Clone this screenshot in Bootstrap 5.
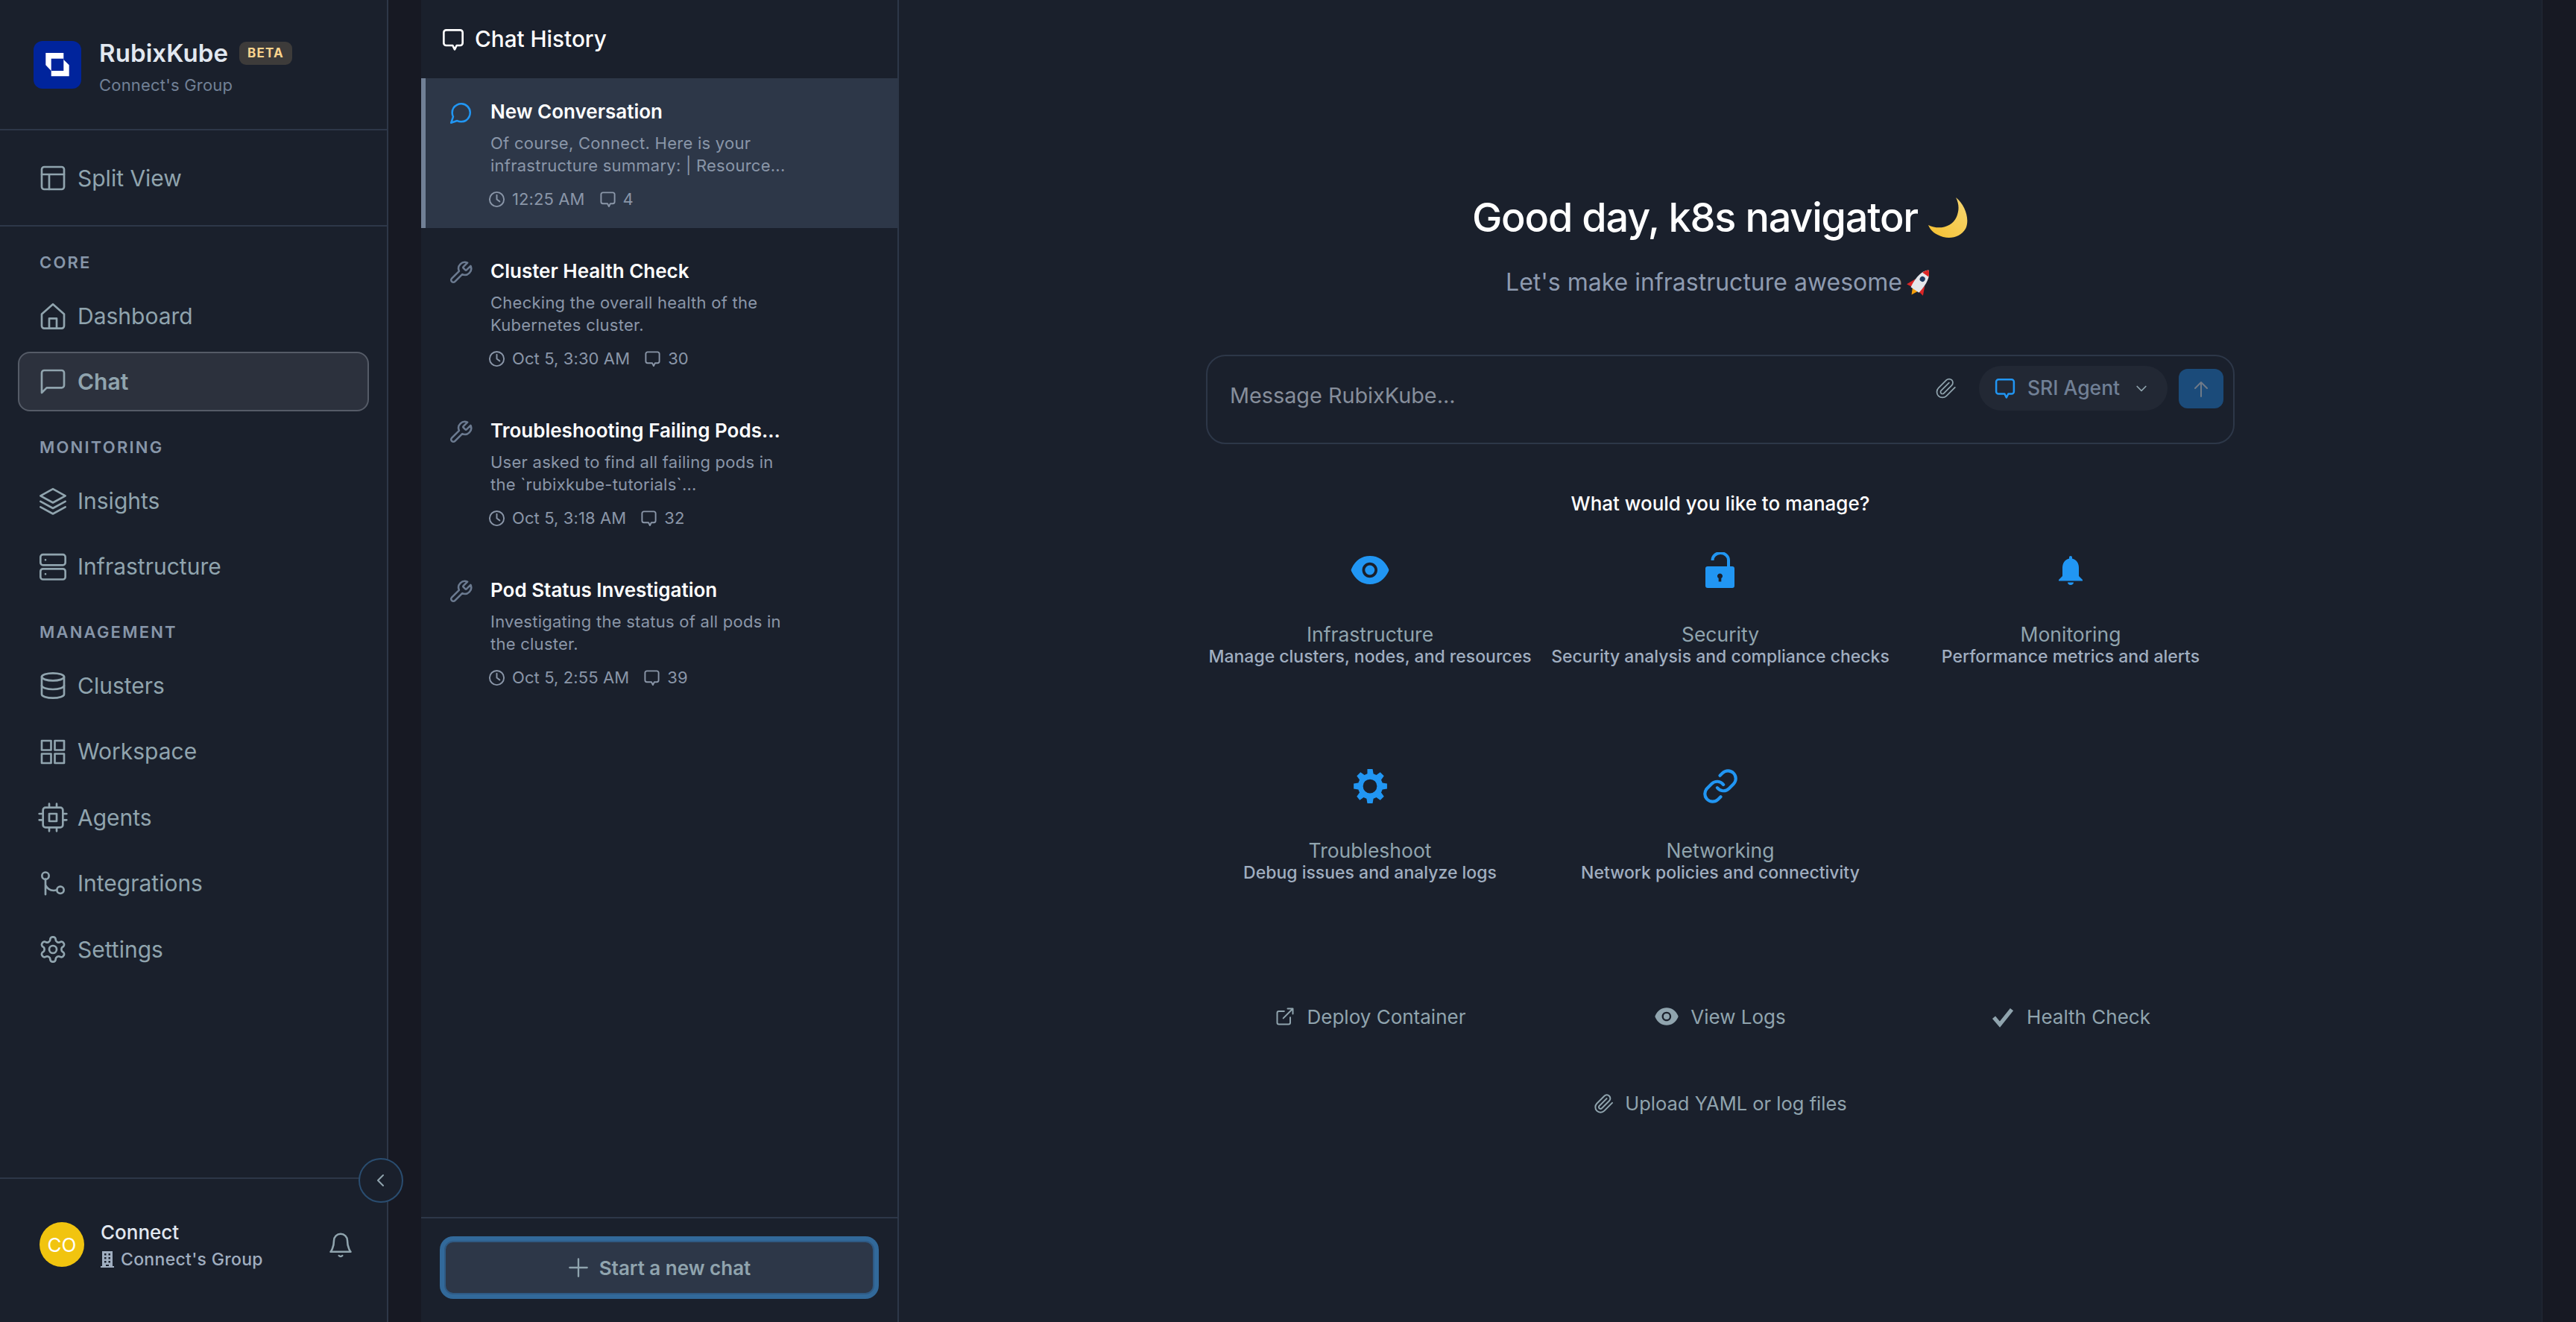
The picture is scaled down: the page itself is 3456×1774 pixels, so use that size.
<!DOCTYPE html>
<html lang="en">

<head>
    <meta charset="UTF-8">
    <meta name="viewport" content="width=device-width, initial-scale=1.0">
    <title>RubixKube Chat</title>
    <link href="https://cdn.jsdelivr.net/npm/bootstrap@5.3.3/dist/css/bootstrap.min.css" rel="stylesheet">
    <style>
        body {
            background: #171923;
            font-family: Inter, "Liberation Sans", sans-serif;
            height: 100vh;
            overflow: hidden;
        }

        .ico { fill: none; stroke: currentColor; stroke-width: 2; stroke-linecap: round; stroke-linejoin: round; flex-shrink: 0; }
        .ico-solid { fill: currentColor; stroke: none; flex-shrink: 0; }

        /* sidebar */
        .side-bar { width: 521px; background: #1a202c; border-right: 2px solid #2d3748; flex-shrink: 0; }
        .brand-box { height: 175px; padding: 55px 0 0 45px; border-bottom: 2px solid #2d3748; }
        .brand-logo { width: 64px; height: 64px; }
        .brand-text { margin-left: 24px; }
        .brand-name { font-size: 33px; font-weight: 600; line-height: 33px; letter-spacing: .1px; color: #e2e8f0; }
        .brand-badge { margin-left: 15px; background: #3d3b3a; color: #fbd38d; font-size: 17px; font-weight: 700; letter-spacing: 1.2px; line-height: 31px; height: 31px; padding: 0 11px; border-radius: 9px; }
        .brand-sub { font-size: 22px; line-height: 30px; margin-top: 11px; color: #718096; letter-spacing: .2px; }
        .split-box { height: 129px; padding: 24px 24px 0; border-bottom: 2px solid #2d3748; }
        .side-links { padding: 0 24px; }
        .side-links.is-loose { gap: 8.6px; }
        .side-label { height: 80px; padding: 32px 0 0 53px; line-height: 32px; font-size: 22px; font-weight: 600; letter-spacing: 2.2px; color: #8796a9; }
        .side-link { height: 80px; padding: 0 25px; gap: 13px; font-size: 30px; color: #90a4ae; border: 2px solid transparent; border-radius: 16px; }
        .side-link:hover { color: #90a4ae; }
        .side-link .ico { width: 40px; height: 40px; stroke-width: 1.6; }
        .side-link.is-active { background: #2c313d; border-color: #555b67; font-weight: 600; }
        .side-foot { height: 194px; padding: 0 44px 16px 53px; border-top: 2px solid #2d3748; }
        .user-dot { width: 60px; height: 60px; background: #f1c40f; color: #fff; font-size: 26px; }
        .user-info { margin-left: 22px; padding-top: 4px; }
        .user-name { font-size: 26px; font-weight: 500; line-height: 36px; color: #e2e8f0; }
        .user-org { font-size: 23px; font-weight: 500; line-height: 36px; gap: 9px; color: #a0aec0; letter-spacing: .3px; }
        .user-bell { color: #90a4ae; stroke-width: 1.7; }
        .collapse-btn { right: -22px; bottom: 160px; width: 60px; height: 60px; background: #1a202c; border: 2.5px solid #2a4d70; color: #90a4ae; }

        /* chat history */
        .history-panel { width: 641px; margin-left: 44px; background: #1a202c; border-right: 2px solid #2d3748; flex-shrink: 0; }
        .history-head { height: 105px; padding-left: 27px; gap: 13px; font-size: 29.7px; font-weight: 500; color: #fff; }
        .history-list { gap: 13px; }
        .history-item { height: 201px; border-left: 6px solid transparent; padding: 30px 0 0 30px; }
        .history-item.is-open { background: #2d3748; border-left-color: #718096; }
        .history-ico { width: 34px; height: 34px; stroke-width: 1.8; color: #6b7a90; }
        .history-ico.is-live { color: #2196f3; }
        .history-body { margin-left: 23px; width: 410px; }
        .history-title { font-size: 26px; font-weight: 600; line-height: 30px; color: #fff; white-space: nowrap; }
        .history-desc { font-size: 22px; line-height: 30px; margin-top: 12px; color: #8a96a8; letter-spacing: .25px; }
        .history-meta { font-size: 22px; line-height: 32px; margin: 14px 0 0 -3px; color: #8a96a8; gap: 9px; letter-spacing: .1px; }
        .history-meta .ico { width: 23px; height: 23px; }
        .history-meta span + svg { margin-left: 10px; }
        .history-foot { margin-top: auto; height: 141px; padding: 30px 31px 0; border-top: 2px solid #2d3748; }
        .new-chat { height: 72px; width: 100%; gap: 14px; background: #2d3748; border: 2px solid #2f5a84; box-shadow: 0 0 0 6px #32699a; border-radius: 12px; color: #90a4ae; font-size: 26px; font-weight: 600; }
        .new-chat:hover { background: #2d3748; color: #90a4ae; border-color: #2f5a84; }

        /* main */
        .main-pane { background: #1a202c; margin-right: 45px; border-right: 1px solid #232936; }
        .main-col { width: 1380px; }
        .hello-title { margin: 258px 0 0; font-size: 54px; font-weight: 500; line-height: 68px; letter-spacing: -1.2px; color: #fff; gap: 14px; }
        .hello-sub { margin-top: 33px; font-size: 32px; line-height: 40px; color: #8e9bb0; gap: 4px; }
        .ask-box { margin-top: 77px; height: 120px; border: 2px solid #2d3748; border-radius: 26px; padding: 13px 13px 0 30px; }
        .ask-text { font-size: 28.8px; margin-top: 18px; color: #868e9b; }
        .ask-clip { width: 30px; height: 30px; stroke-width: 1.4; color: #90a4ae; margin: 15px 29px 0 0; }
        .agent-pill { height: 60px; width: 253px; border-radius: 30px; background: #222834; padding-left: 20px; gap: 15px; color: #718096; font-size: 26.5px; font-weight: 500; }
        .agent-ico { width: 30px; height: 30px; color: #2196f3; }
        .agent-chev { width: 20px; height: 20px; color: #90a4ae; margin-left: 4px; }
        .send-btn { width: 60px; height: 53px; border-radius: 12px; background: #1b4b7a; color: #6f7a88; margin-left: 15px; margin-top: 4px; }
        .manage-head { margin-top: 62px; font-size: 26px; font-weight: 500; line-height: 36px; color: #fff; }
        .topic-grid { margin-top: 39px; display: grid; grid-template-columns: repeat(3, 440px); column-gap: 30px; row-gap: 128px; }
        .topic-ico { height: 64px; color: #2196f3; }
        .topic-name { margin-top: 38px; font-size: 26.5px; line-height: 32px; color: #90a4ae; }
        .topic-info { font-size: 23px; font-weight: 500; line-height: 28px; color: #a0aec0; white-space: nowrap; }
        .quick-grid { margin-top: 161px; display: grid; grid-template-columns: repeat(3, 440px); column-gap: 30px; }
        .quick-item { height: 36px; gap: 16px; font-size: 26px; color: #90a4ae; }
        .quick-item .ico { stroke-width: 1.7; }
        .quick-upload { margin-top: 81px; gap: 14px; font-size: 25.5px; }
        .quick-item .quick-check { stroke-width: 4; stroke-linecap: butt; stroke-linejoin: miter; }
    </style>
</head>

<body class="d-flex">

    <!-- icon sheet -->
    <svg width="0" height="0" class="position-absolute">
        <symbol id="i-split" viewBox="0 0 24 24"><rect x="3" y="3" width="18" height="18" rx="2"/><path d="M3 9h18M9 21V9"/></symbol>
        <symbol id="i-home" viewBox="0 0 24 24"><path d="M3 10.500 12 2.500l9 8V20a2 2 0 0 1-2 2H5a2 2 0 0 1-2-2z"/><path d="M9 22v-8h6v8"/></symbol>
        <symbol id="i-square-chat" viewBox="0 0 24 24"><path d="M21 15a2 2 0 0 1-2 2H7l-4 4V5a2 2 0 0 1 2-2h14a2 2 0 0 1 2 2z"/></symbol>
        <symbol id="i-layers" viewBox="0 0 24 24"><path d="M12 2.500 2 8l10 5.500L22 8zM2 17l10 5.500L22 17M2 12.500 12 18l10-5.500"/></symbol>
        <symbol id="i-server" viewBox="0 0 24 24"><rect x="2" y="2.500" width="20" height="8.500" rx="2"/><rect x="2" y="14" width="20" height="8.500" rx="2"/><path d="M6 6.800h.01M6 18.200h.01"/></symbol>
        <symbol id="i-db" viewBox="0 0 24 24"><ellipse cx="12" cy="5" rx="9" ry="3"/><path d="M3 5v14a9 3 0 0 0 18 0V5"/><path d="M3 12a9 3 0 0 0 18 0"/></symbol>
        <symbol id="i-grid" viewBox="0 0 24 24"><path d="M3 3h7.500v7.500H3zM13.500 3H21v7.500h-7.500zM13.500 13.500H21V21h-7.500zM3 13.500h7.500V21H3z"/></symbol>
        <symbol id="i-cpu" viewBox="0 0 24 24"><rect x="4" y="4" width="16" height="16" rx="2"/><rect x="9" y="9" width="6" height="6"/><path d="M9 1v3M15 1v3M9 20v3M15 20v3M20 9h3M20 14h3M1 9h3M1 14h3"/></symbol>
        <symbol id="i-branch" viewBox="0 0 24 24"><circle cx="6" cy="5.500" r="2.800"/><circle cx="18" cy="17" r="2.800"/><path d="M6 8.300v12.200M6 13c2 4 5.500 5 9.200 4"/></symbol>
        <symbol id="i-gear" viewBox="0 0 24 24"><path d="M12.220 2h-.44a2 2 0 0 0-2 2v.18a2 2 0 0 1-1 1.730l-.43.25a2 2 0 0 1-2 0l-.15-.08a2 2 0 0 0-2.730.73l-.22.38a2 2 0 0 0 .73 2.730l.15.1a2 2 0 0 1 1 1.720v.51a2 2 0 0 1-1 1.740l-.15.09a2 2 0 0 0-.73 2.730l.22.38a2 2 0 0 0 2.730.73l.15-.08a2 2 0 0 1 2 0l.43.25a2 2 0 0 1 1 1.730V20a2 2 0 0 0 2 2h.44a2 2 0 0 0 2-2v-.18a2 2 0 0 1 1-1.730l.43-.25a2 2 0 0 1 2 0l.15.08a2 2 0 0 0 2.730-.73l.22-.39a2 2 0 0 0-.73-2.730l-.15-.08a2 2 0 0 1-1-1.740v-.5a2 2 0 0 1 1-1.740l.15-.09a2 2 0 0 0 .73-2.730l-.22-.38a2 2 0 0 0-2.730-.73l-.15.08a2 2 0 0 1-2 0l-.43-.25a2 2 0 0 1-1-1.730V4a2 2 0 0 0-2-2z"/><circle cx="12" cy="12" r="3"/></symbol>
        <symbol id="i-bell" viewBox="0 0 24 24"><path d="M18 8.500a6 6 0 0 0-12 0c0 6.500-3 10-3 10h18s-3-3.500-3-10"/><path d="M10.500 22a2 2 0 0 0 3 0"/></symbol>
        <symbol id="i-bubble" viewBox="0 0 24 24"><path d="M5 2.500h14a2.500 2.500 0 0 1 2.500 2.500v10.500a2.500 2.500 0 0 1-2.500 2.500h-3.500L13.500 22l-2-4H5a2.500 2.500 0 0 1-2.500-2.500V5A2.500 2.500 0 0 1 5 2.500z"/></symbol>
        <symbol id="i-round-chat" viewBox="0 0 24 24"><path d="M21 11.500a8.380 8.380 0 0 1-.9 3.800 8.500 8.500 0 0 1-7.600 4.700 8.380 8.380 0 0 1-3.800-.9L3 21l1.900-5.700a8.380 8.380 0 0 1-.9-3.800 8.500 8.500 0 0 1 4.700-7.600 8.380 8.380 0 0 1 3.800-.9h.5a8.480 8.480 0 0 1 8 8z"/></symbol>
        <symbol id="i-wrench" viewBox="0 0 24 24"><path d="M14.700 6.300a1 1 0 0 0 0 1.400l1.600 1.600a1 1 0 0 0 1.400 0l3.770-3.770a6 6 0 0 1-7.940 7.940l-6.910 6.910a2.120 2.120 0 0 1-3-3l6.910-6.910a6 6 0 0 1 7.940-7.940z"/></symbol>
        <symbol id="i-clock" viewBox="0 0 24 24"><circle cx="12" cy="12" r="10"/><path d="M12 6v6l4 3"/></symbol>
        <symbol id="i-clip" viewBox="0 0 24 24"><path d="m21.440 11.050-9.190 9.190a6 6 0 0 1-8.490-8.490l8.570-8.570A4 4 0 1 1 18 8.840l-8.590 8.570a2 2 0 0 1-2.830-2.830l8.490-8.480"/></symbol>
        <symbol id="i-link" viewBox="0 0 24 24"><path d="M10 13a5 5 0 0 0 7.540.54l3-3a5 5 0 0 0-7.070-7.070l-1.720 1.710"/><path d="M14 11a5 5 0 0 0-7.540-.54l-3 3a5 5 0 0 0 7.070 7.070l1.710-1.710"/></symbol>
        <symbol id="i-export" viewBox="0 0 24 24"><path d="M18 13v6a2 2 0 0 1-2 2H5a2 2 0 0 1-2-2V8a2 2 0 0 1 2-2h6"/><path d="M15 3h6v6M10 14 21 3"/></symbol>
        <symbol id="i-eye" viewBox="64 64 896 896"><path d="M396 512a112 112 0 1 0 224 0 112 112 0 1 0-224 0zm546.200-25.800C847.400 286.500 704.100 186 512 186c-192.200 0-335.400 100.500-430.200 300.300a60.300 60.300 0 0 0 0 51.500C176.600 737.500 319.900 838 512 838c192.200 0 335.400-100.500 430.200-300.300 7.700-16.200 7.700-35 0-51.500zM508 688c-97.200 0-176-78.800-176-176s78.800-176 176-176 176 78.800 176 176-78.800 176-176 176z"/></symbol>
        <symbol id="i-gear-solid" viewBox="0 0 24 24"><path fill-rule="evenodd" d="M10.300 1h3.400l.5 3 1.900.8 2.500-1.800 2.400 2.400-1.800 2.500.8 1.900 3 .5v3.400l-3 .5-.8 1.900 1.800 2.500-2.400 2.400-2.500-1.800-1.900.8-.5 3h-3.400l-.5-3-1.900-.8-2.500 1.800L3.500 18.600l1.800-2.500-.8-1.900-3-.5v-3.400l3-.5.8-1.900-1.800-2.500L5.900 3l2.500 1.800 1.900-.8zM12 7.500a4.500 4.500 0 1 0 0 9 4.500 4.500 0 0 0 0-9z"/></symbol>
        <symbol id="i-unlock" viewBox="0 0 48 48"><path d="M7 19h33a3 3 0 0 1 3 3v23a3 3 0 0 1-3 3H7a3 3 0 0 1-3-3V22a3 3 0 0 1 3-3zm16.500 9.500a3.500 3.500 0 0 0-1.800 6.500v4.500h3.600V35a3.500 3.500 0 0 0-1.800-6.500z" fill-rule="evenodd"/><path d="M13.500 11A10.500 9.500 0 0 1 35 10.500V19" fill="none" stroke="currentColor" stroke-width="4"/></symbol>
        <symbol id="i-bell-solid" viewBox="0 0 48 48"><path d="M24 5c1.200 0 2 .8 2 2v1.500C32 10 35 15 35 21v11l5 5v1.500H8V37l5-5V21c0-6 3-11 9-12.500V7c0-1.200.8-2 2-2z"/><path d="M20 40.500h8c0 2-1.800 3.500-4 3.500s-4-1.500-4-3.500z"/></symbol>
    </svg>

    <!-- Sidebar -->
    <aside class="side-bar d-flex flex-column position-relative">
        <div class="brand-box d-flex align-items-start">
            <svg class="brand-logo" viewBox="0 0 64 64">
                <rect width="64" height="64" rx="12" fill="#00249c"/>
                <path fill="#fff" d="M16.300 16h24v9l7.400 7.300v15h-24V40l-7.400-7.700z"/>
                <rect x="23.700" y="23.700" width="16.600" height="16.300" fill="#00249c"/>
            </svg>
            <div class="brand-text">
                <div class="d-flex align-items-center">
                    <span class="brand-name">RubixKube</span>
                    <span class="brand-badge">BETA</span>
                </div>
                <div class="brand-sub">Connect's Group</div>
            </div>
        </div>

        <div class="split-box">
            <a href="#" class="side-link d-flex align-items-center text-decoration-none">
                <svg class="ico"><use href="#i-split"/></svg>Split View
            </a>
        </div>

        <div class="side-label">CORE</div>
        <div class="side-links d-flex flex-column gap-2">
            <a href="#" class="side-link d-flex align-items-center text-decoration-none"><svg class="ico"><use href="#i-home"/></svg>Dashboard</a>
            <a href="#" class="side-link is-active d-flex align-items-center text-decoration-none"><svg class="ico"><use href="#i-square-chat"/></svg>Chat</a>
        </div>

        <div class="side-label">MONITORING</div>
        <div class="side-links d-flex flex-column gap-2">
            <a href="#" class="side-link d-flex align-items-center text-decoration-none"><svg class="ico"><use href="#i-layers"/></svg>Insights</a>
            <a href="#" class="side-link d-flex align-items-center text-decoration-none"><svg class="ico"><use href="#i-server"/></svg>Infrastructure</a>
        </div>

        <div class="side-label">MANAGEMENT</div>
        <div class="side-links is-loose d-flex flex-column">
            <a href="#" class="side-link d-flex align-items-center text-decoration-none"><svg class="ico"><use href="#i-db"/></svg>Clusters</a>
            <a href="#" class="side-link d-flex align-items-center text-decoration-none"><svg class="ico"><use href="#i-grid"/></svg>Workspace</a>
            <a href="#" class="side-link d-flex align-items-center text-decoration-none"><svg class="ico"><use href="#i-cpu"/></svg>Agents</a>
            <a href="#" class="side-link d-flex align-items-center text-decoration-none"><svg class="ico"><use href="#i-branch"/></svg>Integrations</a>
            <a href="#" class="side-link d-flex align-items-center text-decoration-none"><svg class="ico"><use href="#i-gear"/></svg>Settings</a>
        </div>

        <div class="side-foot d-flex align-items-center mt-auto">
            <div class="user-dot rounded-circle d-flex align-items-center justify-content-center">CO</div>
            <div class="user-info flex-grow-1">
                <div class="user-name">Connect</div>
                <div class="user-org d-flex align-items-center">
                    <svg width="18" height="22" viewBox="0 0 18 22" fill="currentColor"><path fill-rule="evenodd" d="M2 0h14v20h2v2H0v-2h2zm3 3v2.500h2.500V3zm5.500 0v2.500H13V3zM5 8v2.500h2.500V8zm5.500 0v2.500H13V8zM5 13v2.500h2.500V13zm5.500 0v2.500H13V13zM7 18v2h4v-2z"/></svg>
                    Connect's Group
                </div>
            </div>
            <svg class="ico user-bell" width="36" height="38"><use href="#i-bell"/></svg>
        </div>

        <button class="collapse-btn btn p-0 rounded-circle position-absolute d-flex align-items-center justify-content-center">
            <svg class="ico" width="24" height="24" viewBox="0 0 24 24"><path d="m15 5-7 7 7 7"/></svg>
        </button>
    </aside>

    <!-- Chat history -->
    <section class="history-panel d-flex flex-column">
        <div class="history-head d-flex align-items-center">
            <svg class="ico" width="32" height="32"><use href="#i-bubble"/></svg>Chat History
        </div>
        <div class="history-list d-flex flex-column">
            <div class="history-item is-open d-flex align-items-start">
                <svg class="ico history-ico is-live"><use href="#i-round-chat"/></svg>
                <div class="history-body">
                    <div class="history-title">New Conversation</div>
                    <div class="history-desc">Of course, Connect. Here is your infrastructure summary: | Resource...</div>
                    <div class="history-meta d-flex align-items-center">
                        <svg class="ico"><use href="#i-clock"/></svg><span>12:25 AM</span>
                        <svg class="ico"><use href="#i-bubble"/></svg><span>4</span>
                    </div>
                </div>
            </div>
            <div class="history-item d-flex align-items-start">
                <svg class="ico history-ico"><use href="#i-wrench"/></svg>
                <div class="history-body">
                    <div class="history-title">Cluster Health Check</div>
                    <div class="history-desc">Checking the overall health of the Kubernetes cluster.</div>
                    <div class="history-meta d-flex align-items-center">
                        <svg class="ico"><use href="#i-clock"/></svg><span>Oct 5, 3:30 AM</span>
                        <svg class="ico"><use href="#i-bubble"/></svg><span>30</span>
                    </div>
                </div>
            </div>
            <div class="history-item d-flex align-items-start">
                <svg class="ico history-ico"><use href="#i-wrench"/></svg>
                <div class="history-body">
                    <div class="history-title">Troubleshooting Failing Pods...</div>
                    <div class="history-desc">User asked to find all failing pods in the `rubixkube-tutorials`...</div>
                    <div class="history-meta d-flex align-items-center">
                        <svg class="ico"><use href="#i-clock"/></svg><span>Oct 5, 3:18 AM</span>
                        <svg class="ico"><use href="#i-bubble"/></svg><span>32</span>
                    </div>
                </div>
            </div>
            <div class="history-item d-flex align-items-start">
                <svg class="ico history-ico"><use href="#i-wrench"/></svg>
                <div class="history-body">
                    <div class="history-title">Pod Status Investigation</div>
                    <div class="history-desc">Investigating the status of all pods in the cluster.</div>
                    <div class="history-meta d-flex align-items-center">
                        <svg class="ico"><use href="#i-clock"/></svg><span>Oct 5, 2:55 AM</span>
                        <svg class="ico"><use href="#i-bubble"/></svg><span>39</span>
                    </div>
                </div>
            </div>
        </div>
        <div class="history-foot">
            <button class="new-chat btn d-flex align-items-center justify-content-center">
                <svg class="ico" width="28" height="28" viewBox="0 0 24 24"><path d="M12 2v20M2 12h20"/></svg>Start a new chat
            </button>
        </div>
    </section>

    <!-- Main -->
    <main class="main-pane flex-grow-1 d-flex justify-content-center">
        <div class="main-col">
            <h1 class="hello-title d-flex align-items-center justify-content-center">Good day, k8s navigator
                <svg width="54" height="54" viewBox="0 0 54 54">
                    <defs><linearGradient id="moon-grad" x1="1" y1="0" x2="0" y2="1"><stop offset="0" stop-color="#f7d774"/><stop offset="1" stop-color="#f5c02f"/></linearGradient></defs>
                    <path fill="url(#moon-grad)" d="M37 0c13 10 19 30 13 42-6 10-18 14-30 11C10 50 3 45 0 37c14 7 32 3 38-11 4-10 3-18-1-26z"/>
                </svg>
            </h1>
            <div class="hello-sub d-flex align-items-center justify-content-center">Let's make infrastructure awesome
                <svg width="40" height="40" viewBox="0 0 36 36">
                    <g transform="rotate(35 18 18)">
                        <path fill="#f59e0b" d="M14 28h8l-4 8z"/>
                        <path fill="#dc2626" d="M11 18 6 29l7-1zM25 18l5 11-7-1z"/>
                        <path fill="#e5e7eb" d="M18 0c6 5 8 14 6 29H12C10 14 12 5 18 0z"/>
                        <path fill="#dc2626" d="M18 0c2.200 2 3.500 3.500 4.500 6.500h-9C14.500 3.500 15.800 2 18 0z"/>
                        <circle cx="18" cy="13" r="3.200" fill="#1e3a5f"/>
                    </g>
                </svg>
            </div>

            <div class="ask-box d-flex align-items-start">
                <div class="ask-text flex-grow-1">Message RubixKube...</div>
                <svg class="ico ask-clip"><use href="#i-clip"/></svg>
                <div class="agent-pill d-flex align-items-center">
                    <svg class="ico agent-ico"><use href="#i-bubble"/></svg>SRI Agent
                    <svg class="ico agent-chev" viewBox="0 0 24 24"><path d="m5 9 7 7 7-7"/></svg>
                </div>
                <button class="send-btn btn p-0 d-flex align-items-center justify-content-center border-0">
                    <svg class="ico" width="24" height="24" viewBox="0 0 24 24"><path d="M12 22V3M4 11l8-8 8 8"/></svg>
                </button>
            </div>

            <div class="manage-head text-center">What would you like to manage?</div>

            <div class="topic-grid">
                <div class="d-flex flex-column align-items-center">
                    <div class="topic-ico d-flex align-items-center justify-content-center"><svg class="ico-solid" width="52" height="52"><use href="#i-eye"/></svg></div>
                    <div class="topic-name">Infrastructure</div>
                    <div class="topic-info">Manage clusters, nodes, and resources</div>
                </div>
                <div class="d-flex flex-column align-items-center">
                    <div class="topic-ico d-flex align-items-center justify-content-center"><svg class="ico-solid" width="48" height="48"><use href="#i-unlock"/></svg></div>
                    <div class="topic-name">Security</div>
                    <div class="topic-info">Security analysis and compliance checks</div>
                </div>
                <div class="d-flex flex-column align-items-center">
                    <div class="topic-ico d-flex align-items-center justify-content-center"><svg class="ico-solid" width="48" height="48"><use href="#i-bell-solid"/></svg></div>
                    <div class="topic-name">Monitoring</div>
                    <div class="topic-info">Performance metrics and alerts</div>
                </div>
                <div class="d-flex flex-column align-items-center">
                    <div class="topic-ico d-flex align-items-center justify-content-center"><svg class="ico-solid" width="50" height="50"><use href="#i-gear-solid"/></svg></div>
                    <div class="topic-name">Troubleshoot</div>
                    <div class="topic-info">Debug issues and analyze logs</div>
                </div>
                <div class="d-flex flex-column align-items-center">
                    <div class="topic-ico d-flex align-items-center justify-content-center"><svg class="ico" width="50" height="50"><use href="#i-link"/></svg></div>
                    <div class="topic-name">Networking</div>
                    <div class="topic-info">Network policies and connectivity</div>
                </div>
            </div>

            <div class="quick-grid">
                <div class="quick-item d-flex align-items-center justify-content-center"><svg class="ico" width="28" height="28"><use href="#i-export"/></svg>Deploy Container</div>
                <div class="quick-item d-flex align-items-center justify-content-center"><svg class="ico-solid" width="32" height="32"><use href="#i-eye"/></svg>View Logs</div>
                <div class="quick-item d-flex align-items-center justify-content-center"><svg class="ico quick-check" width="32" height="32" viewBox="0 0 24 24"><path d="M3 13l6 7L21 5"/></svg>Health Check</div>
            </div>
            <div class="quick-item quick-upload d-flex align-items-center justify-content-center"><svg class="ico" width="28" height="28"><use href="#i-clip"/></svg>Upload YAML or log files</div>
        </div>
    </main>

    <script src="https://cdn.jsdelivr.net/npm/bootstrap@5.3.3/dist/js/bootstrap.bundle.min.js"></script>
</body>

</html>
